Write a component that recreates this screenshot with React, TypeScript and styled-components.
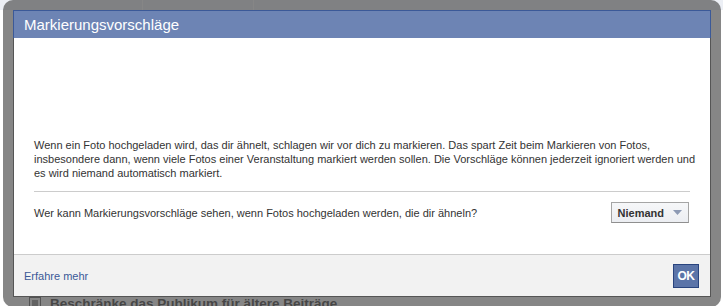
import React from "react";
import styled, { createGlobalStyle } from "styled-components";

const GlobalStyle = createGlobalStyle`
  html, body { margin: 0; padding: 0; background: #ffffff; }
  body { font-family: "Liberation Sans", Arial, sans-serif; }
  * { box-sizing: border-box; }
`;

const Page = styled.div`
  position: relative;
  width: 723px;
  height: 306px;
  overflow: hidden;
  display: grid;
  grid-template-rows: 10px 1fr auto;
  background: #ffffff;
`;

const Tabs = styled.div`
  display: flex;
  background: #eceff5;
`;

const Tab = styled.div<{ $w: number }>`
  width: ${(p) => p.$w}px;
  border-right: 1px solid #ffffff;
`;

const BottomRow = styled.div`
  display: flex;
  align-items: center;
  gap: 8px;
  padding-left: 28px;
  height: 18px;
  margin-bottom: -6px;
  font-size: 13.5px;
  font-weight: bold;
  color: #2a2a2a;
`;

const Overlay = styled.div`
  position: absolute;
  top: 0;
  left: 3px;
  width: 718px;
  height: 307px;
  padding: 10px;
  border-radius: 10px;
  background: rgba(82, 82, 82, 0.7);
`;

const Dialog = styled.div`
  display: flex;
  flex-direction: column;
  width: 698px;
  border: 1px solid #555555;
  border-top: none;
  background: #ffffff;
  color: #333333;
  font-size: 11px;
`;

const Title = styled.div`
  margin: 0 -1px;
  height: 28px;
  padding: 0 10px;
  border: 1px solid #3b5998;
  border-bottom: none;
  background: #6d84b4;
  color: #ffffff;
  font-size: 15px;
  line-height: 27px;
`;

const Body = styled.div`
  height: 216px;
  padding: 100px 20px 0 20px;
`;

const Paragraph = styled.p`
  margin: 0;
  line-height: 14px;
  white-space: nowrap;
`;

const Divider = styled.div`
  margin-top: 11px;
  height: 1px;
  background: #cccccc;
`;

const QuestionRow = styled.div`
  margin-top: 10px;
  display: flex;
  align-items: center;
  justify-content: space-between;
`;

const SelectButton = styled.button`
  display: flex;
  align-items: center;
  gap: 9px;
  height: 21px;
  padding: 0 6px 0 6px;
  margin-right: 1px;
  border: 1px solid #a5a5a5;
  border-bottom-color: #8f8f8f;
  background: linear-gradient(#f6f7f9, #eceef2);
  color: #333333;
  font-family: "Liberation Sans", Arial, sans-serif;
  font-size: 11px;
  font-weight: bold;
`;

const Footer = styled.div`
  height: 42px;
  padding: 0 10px;
  border-top: 1px solid #cccccc;
  background: #f2f2f2;
  display: flex;
  align-items: center;
  justify-content: space-between;
`;

const Link = styled.a`
  color: #3b5998;
  text-decoration: none;
  font-size: 11px;
`;

const OkButton = styled.button`
  width: 26px;
  height: 24px;
  padding: 0;
  margin-right: 1px;
  border: 1px solid #29447e;
  background: #5b74a8;
  color: #ffffff;
  font-family: "Liberation Sans", Arial, sans-serif;
  font-size: 12px;
  font-weight: bold;
  letter-spacing: -0.5px;
`;

const Caret = () => (
  <svg width="9" height="5" viewBox="0 0 9 5">
    <path d="M0 0 H9 L4.5 5 Z" fill="#8d9ab4" />
  </svg>
);

const PageIcon = () => (
  <svg width="14" height="14" viewBox="0 0 14 14">
    <rect x="1.5" y="1.5" width="11" height="11" fill="none" stroke="#555" />
    <rect x="4" y="4" width="6" height="6" fill="#888" />
  </svg>
);

export default function App() {
  return (
    <>
      <GlobalStyle />
      <Page>
        <Tabs>
          <Tab $w={143} />
          <Tab $w={111} />
        </Tabs>
        <div />
        <BottomRow>
          <PageIcon />
          <span>Beschränke das Publikum für ältere Beiträge</span>
        </BottomRow>
        <Overlay>
          <Dialog>
            <Title>Markierungsvorschläge</Title>
            <Body>
              <Paragraph>
                Wenn ein Foto hochgeladen wird, das dir ähnelt, schlagen wir vor dich zu markieren. Das spart Zeit beim Markieren von Fotos,
                <br />
                insbesondere dann, wenn viele Fotos einer Veranstaltung markiert werden sollen. Die Vorschläge können jederzeit ignoriert werden und
                <br />
                es wird niemand automatisch markiert.
              </Paragraph>
              <Divider />
              <QuestionRow>
                <span>Wer kann Markierungsvorschläge sehen, wenn Fotos hochgeladen werden, die dir ähneln?</span>
                <SelectButton>
                  Niemand
                  <Caret />
                </SelectButton>
              </QuestionRow>
            </Body>
            <Footer>
              <Link href="#">Erfahre mehr</Link>
              <OkButton>OK</OkButton>
            </Footer>
          </Dialog>
        </Overlay>
      </Page>
    </>
  );
}
